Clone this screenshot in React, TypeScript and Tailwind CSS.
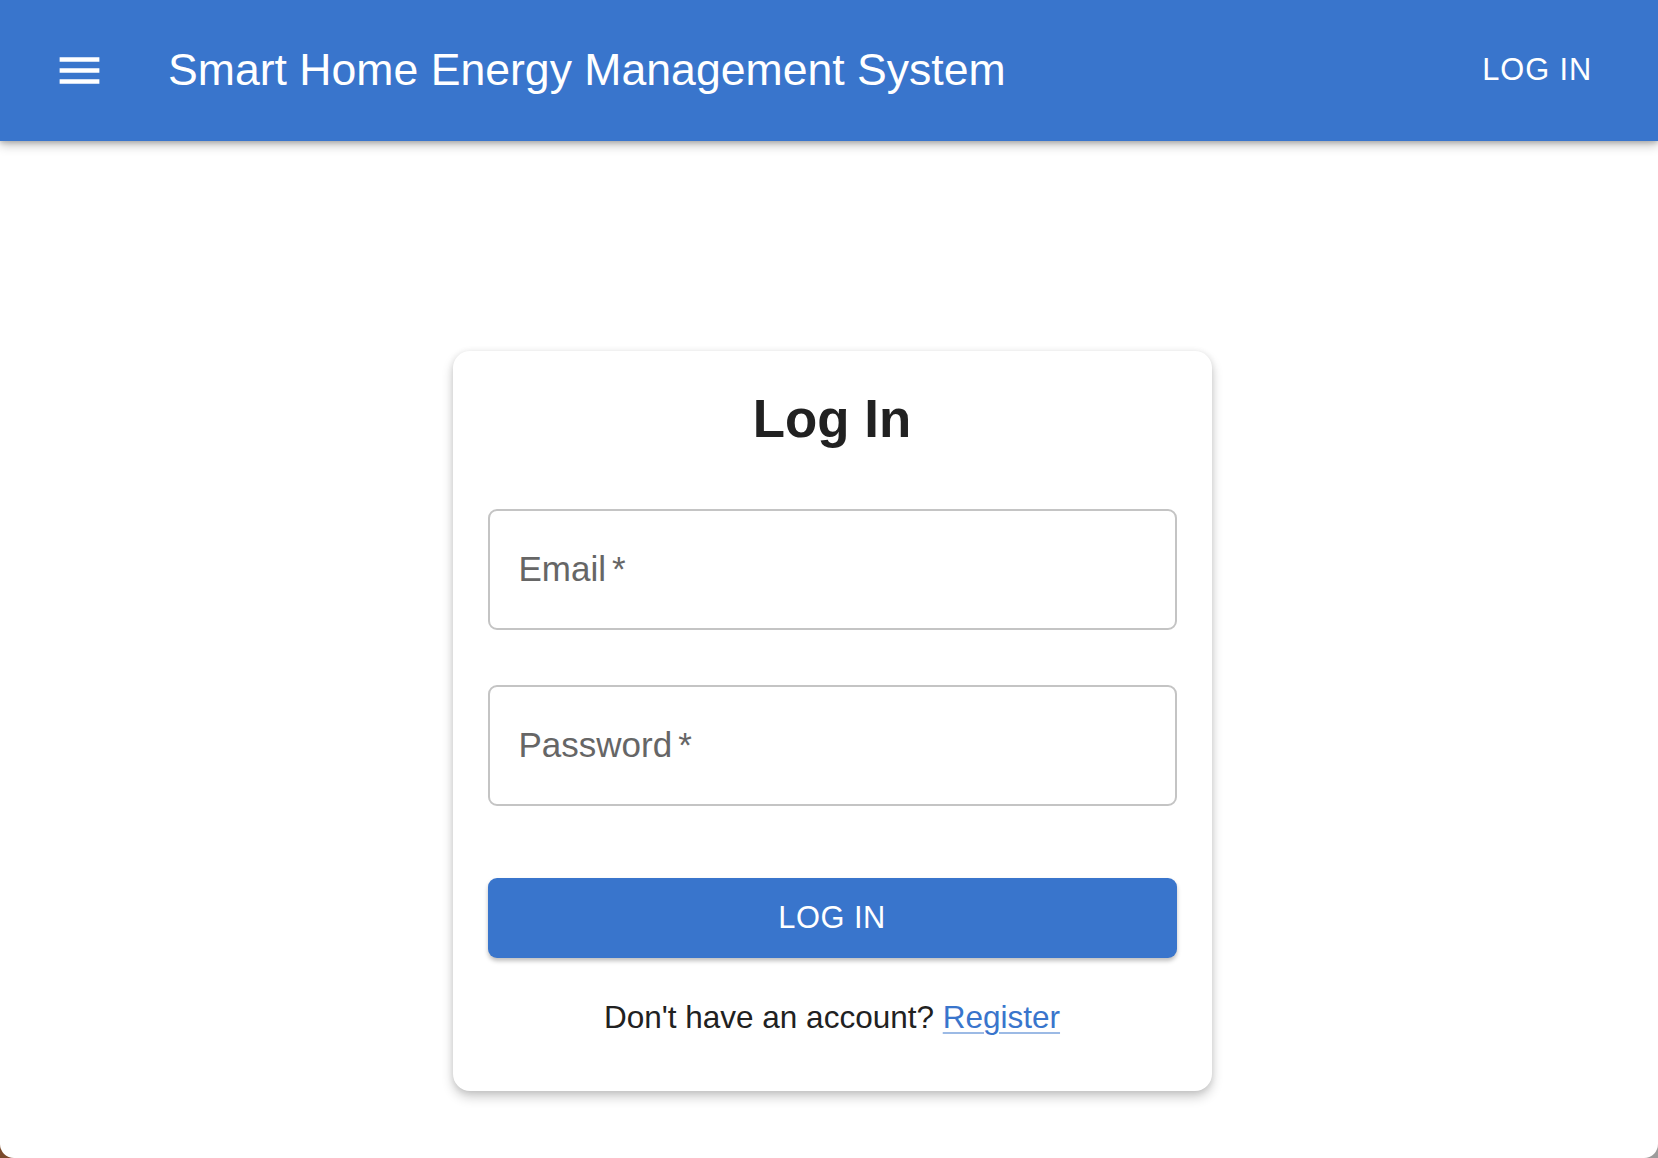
import React from "react";

function MenuIcon() {
  return (
    <svg viewBox="0 0 24 24" className="h-[53px] w-[53px]" fill="currentColor">
      <path d="M3 18h18v-2H3zm0-5h18v-2H3zm0-7v2h18V6z" />
    </svg>
  );
}

function Field({ label }: { label: string }) {
  return (
    <div className="flex h-[121px] items-center rounded-[9px] border-2 border-[#c4c4c4] px-[29px]">
      <span className="text-[35px] text-[#666666]">
        {label}
        <span className="ml-[6px]">*</span>
      </span>
    </div>
  );
}

export default function App() {
  return (
    <div
      className="h-[1158px] w-full bg-gradient-to-r from-[#7b4a2c] to-[#9c9c9c]"
      style={{ fontFamily: '"Liberation Sans", Arial, sans-serif' }}
    >
      <div className="flex h-full flex-col overflow-hidden rounded-b-[14px] bg-white">
        <header className="relative z-10 flex h-[141px] shrink-0 items-center bg-[#3975cc] pl-[53px] pr-[66px] text-white shadow-[0_4px_10px_rgba(0,0,0,0.25),0_2px_4px_rgba(0,0,0,0.15)]">
          <MenuIcon />
          <h1 className="ml-[62px] flex-1 text-[44.6px] leading-none">
            Smart Home Energy Management System
          </h1>
          <button className="text-[30.8px] uppercase tracking-[0.88px]">Log In</button>
        </header>

        <main className="flex-1">
          <div className="mx-auto mt-[210px] w-[759px] translate-x-[3px] rounded-[17px] bg-white px-[35px] pt-[33px] pb-[52px] shadow-[0_6px_12px_rgba(0,0,0,0.2),0_1px_6px_rgba(0,0,0,0.1)]">
            <h2 className="text-center text-[52.8px] font-bold leading-[70px] text-[#212121]">
              Log In
            </h2>
            <div className="mt-[55px]">
              <Field label="Email" />
            </div>
            <div className="mt-[55px]">
              <Field label="Password" />
            </div>
            <button className="mt-[72px] flex h-[80px] w-full items-center justify-center rounded-[9px] bg-[#3975cc] text-[30.8px] uppercase tracking-[0.5px] text-white shadow-[0_3px_4px_rgba(0,0,0,0.25)]">
              Log In
            </button>
            <p className="mt-[37px] text-center text-[31.5px] leading-[44px] text-[#212121]">
              Don't have an account?{" "}
              <a
                href="#"
                className="text-[#3975cc] underline decoration-[#3975cc]/50 decoration-2 underline-offset-[4px]"
              >
                Register
              </a>
            </p>
          </div>
        </main>
      </div>
    </div>
  );
}
